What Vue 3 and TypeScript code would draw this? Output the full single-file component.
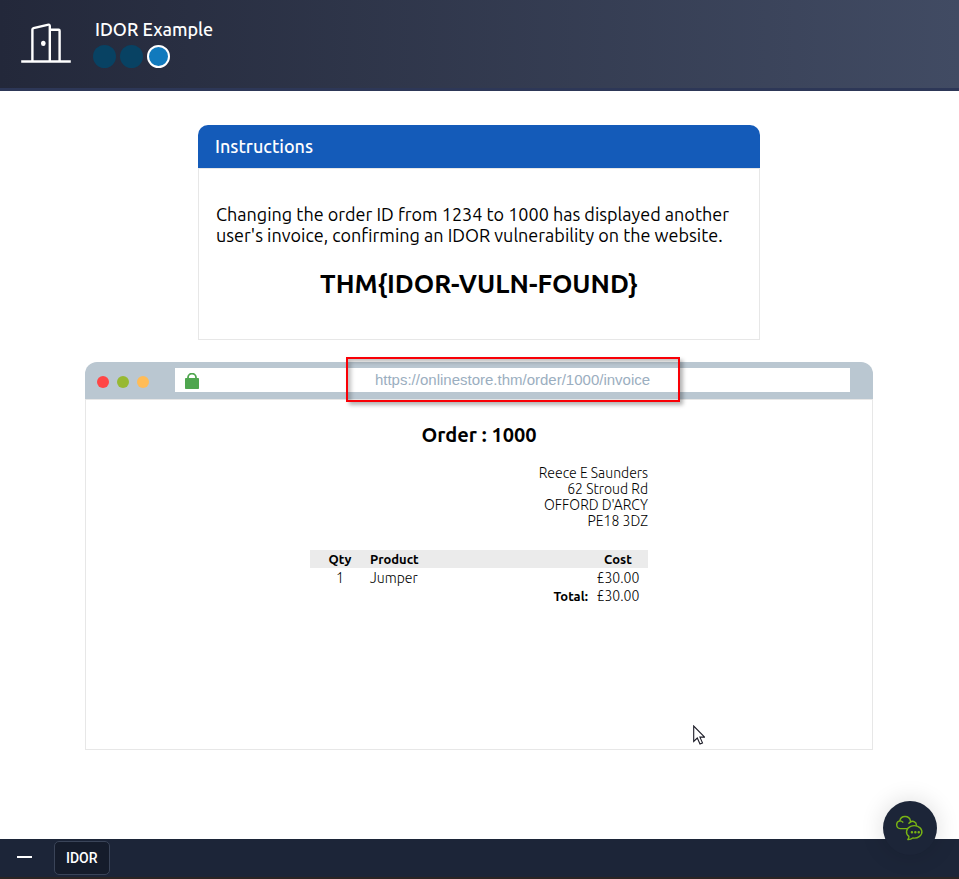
<script setup lang="ts">
interface OrderLine {
  qty: number
  product: string
  cost: string
}

const steps: number[] = [1, 2, 3]
const currentStep = 3
const address: string[] = ['Reece E Saunders', '62 Stroud Rd', "OFFORD D'ARCY", 'PE18 3DZ']
const lines: OrderLine[] = [{ qty: 1, product: 'Jumper', cost: '£30.00' }]
const url = 'https://onlinestore.thm/order/1000/invoice'
</script>

<template>
  <div class="page">
    <header class="top">
      <svg class="door" viewBox="0 0 50 42" fill="none" stroke="#fff" stroke-width="2.4" stroke-linejoin="round" aria-hidden="true">
        <path d="M0.2 38.5H49.8" />
        <path d="M11.4 38V6.6Q11.4 5.5 12.5 5.2L26.5 1.8Q28.8 1.2 28.8 3V38" />
        <path d="M29 6.8H37.7Q38.6 6.8 38.6 7.7V38" />
        <ellipse cx="22.3" cy="20.4" rx="2.3" ry="2.6" fill="#fff" stroke="none" />
      </svg>
      <div class="lesson">
        <h1>IDOR Example</h1>
        <ol class="steps">
          <li v-for="s in steps" :key="s" :class="{ current: s === currentStep }"></li>
        </ol>
      </div>
    </header>

    <main>
      <section class="card">
        <h2>Instructions</h2>
        <div class="card-body">
          <p>Changing the order ID from 1234 to 1000 has displayed another user's invoice, confirming an IDOR vulnerability on the website.</p>
          <strong class="flag">THM{IDOR-VULN-FOUND}</strong>
        </div>
      </section>

      <section class="browser">
        <div class="bar">
          <span class="dot red"></span>
          <span class="dot green"></span>
          <span class="dot amber"></span>
          <div class="address-bar">
            <svg class="lock" viewBox="0 0 14 16" aria-hidden="true">
              <path d="M3 6V4.6a4 4 0 0 1 8 0V6" fill="none" stroke="#4fa64f" stroke-width="1.8" />
              <rect y="5" width="14" height="11" rx="0.8" fill="#4fa64f" />
            </svg>
            <input type="text" :value="url" aria-label="Address" readonly />
          </div>
          <div class="highlight"></div>
        </div>
        <div class="invoice">
          <h3>Order : 1000</h3>
          <address>
            <div v-for="a in address" :key="a">{{ a }}</div>
          </address>
          <table>
            <thead>
              <tr>
                <th class="qty">Qty</th>
                <th class="product">Product</th>
                <th class="cost">Cost</th>
              </tr>
            </thead>
            <tbody>
              <tr v-for="l in lines" :key="l.product">
                <td class="qty">{{ l.qty }}</td>
                <td class="product">{{ l.product }}</td>
                <td class="cost">{{ l.cost }}</td>
              </tr>
            </tbody>
            <tfoot>
              <tr>
                <th class="total" colspan="2">Total:</th>
                <td class="cost">£30.00</td>
              </tr>
            </tfoot>
          </table>
        </div>
        <svg class="pointer" viewBox="0 0 12 20" aria-hidden="true">
          <path d="M0.7 1V16.4L4.3 13L7 19L9.5 17.9L6.9 12.1H11.6Z" fill="#fff" stroke="#1b1b26" stroke-width="1.1" />
        </svg>
      </section>
    </main>

    <footer>
      <button class="minimise" type="button" aria-label="Minimise"><span></span></button>
      <button class="tab" type="button">IDOR</button>
      <button class="chat" type="button" aria-label="Chat">
        <svg viewBox="0 0 28 26" fill="none" stroke="#79b414" stroke-width="1.4" stroke-linecap="round" stroke-linejoin="round" aria-hidden="true">
          <path d="M10.6 13.6H4.2A3.9 3.9 0 0 1 3.8 5.9A5.4 5.2 0 0 1 14.4 5.6Q14.6 6.4 14.5 7A3.8 3.8 0 0 1 20.4 10.2" />
          <path d="M3.8 5.9Q5.8 5.8 6.8 7.2M14.5 7Q13.4 7.4 12.9 8.4" />
          <path d="M11.8 24.6Q13.2 23.2 12.9 21.4A7.7 6.2 0 1 1 16.8 23Q14.6 24.8 11.8 24.6Z" />
          <path d="M15.9 17.2h0.1M19.3 17.2h0.1M22.7 17.2h0.1" stroke-width="2.4" />
        </svg>
      </button>
    </footer>
  </div>
</template>

<style>
body {
  margin: 0;
  background: #fff;
}
</style>

<style scoped>
.page {
  display: flex;
  flex-direction: column;
  min-height: 100vh;
  font-family: Ubuntu, "Noto Sans", sans-serif;
  color: #000;
}
h1, h2, h3, p, ol {
  margin: 0;
  padding: 0;
}
.top {
  display: flex;
  align-items: flex-start;
  gap: 22px;
  box-sizing: border-box;
  height: 91px;
  padding: 18px 21px 0;
  border-bottom: 3px solid #2d3757;
  background: linear-gradient(90deg, #23283a, #414b63);
  color: #fff;
}
.door {
  width: 50px;
  height: 42px;
  margin-top: 5px;
}
h1 {
  padding-left: 2px;
  font-size: 18px;
  font-weight: 500;
  line-height: 22px;
}
.steps {
  display: flex;
  gap: 4px;
  margin-top: 5px;
  list-style: none;
}
.steps li {
  box-sizing: border-box;
  width: 23px;
  height: 23px;
  border-radius: 50%;
  background: #084263;
}
.steps .current {
  border: 2px solid #fff;
  background: #117abd;
}
main {
  display: flex;
  flex: 1;
  flex-direction: column;
  align-items: center;
  gap: 22px;
  padding: 34px 25px 34px 24px;
}
.card {
  width: 100%;
  max-width: 562px;
}
.card h2 {
  padding: 0 17px;
  border-radius: 10px 10px 0 0;
  background: #145bb9;
  color: #fff;
  font-size: 18px;
  font-weight: 500;
  line-height: 43px;
}
.card-body {
  padding: 35px 17px 37px;
  border: 1px solid #e7e7e7;
}
.card-body p {
  font-size: 18px;
  line-height: 21px;
}
.flag {
  display: block;
  margin-top: 20px;
  font-size: 26px;
  font-weight: 600;
  line-height: 36px;
  text-align: center;
}
.browser {
  position: relative;
  display: flex;
  flex: 1;
  flex-direction: column;
  width: 100%;
  max-width: 788px;
  max-height: 388px;
}
.bar {
  position: relative;
  display: flex;
  align-items: flex-start;
  gap: 8px;
  height: 37px;
  padding: 0 23px 0 12px;
  border-radius: 12px 12px 0 0;
  background: #bac7d1;
}
.dot {
  width: 12px;
  height: 12px;
  margin-top: 14px;
  border-radius: 50%;
}
.red { background: #ff4646; }
.green { background: #97b932; }
.amber { background: #ffbc57; }
.address-bar {
  display: flex;
  flex: 1;
  align-items: center;
  height: 24px;
  margin: 6px 0 0 18px;
  padding: 0 10px;
  background: #fff;
}
.lock {
  width: 14px;
  height: 16px;
  margin-top: 2px;
}
.address-bar input {
  flex: 1;
  min-width: 0;
  height: 24px;
  box-sizing: border-box;
  padding: 0 14px 2px 0;
  border: 0;
  outline: 0;
  background: transparent;
  color: #9baec0;
  font-family: "Liberation Sans", Arial, sans-serif;
  font-size: 15px;
  text-align: center;
}
.highlight {
  position: absolute;
  top: -5px;
  left: calc(50% - 133px);
  box-sizing: border-box;
  width: 334px;
  height: 45px;
  border: 2px solid #f90006;
  box-shadow: 3px 3px 4px rgba(0, 0, 0, 0.3), inset 3px 3px 4px rgba(0, 0, 0, 0.25);
  pointer-events: none;
}
.invoice {
  flex: 1;
  padding: 21px 24px;
  border: 1px solid #e7e7e7;
}
.invoice h3 {
  font-size: 20px;
  font-weight: 600;
  line-height: 28px;
  text-align: center;
}
address,
table {
  width: 100%;
  max-width: 338px;
  margin: 16px auto 0;
}
address {
  font-size: 14px;
  font-style: normal;
  font-weight: 300;
  line-height: 16px;
  text-align: right;
}
table {
  margin-top: 21px;
  border-collapse: collapse;
  table-layout: fixed;
  font-size: 14px;
  font-weight: 300;
  line-height: 18px;
}
th {
  font-size: 13px;
  font-weight: 600;
}
th, td {
  padding: 0;
}
thead {
  background: #ebebeb;
}
tbody td {
  padding-top: 1px;
}
.qty, .cost {
  width: 60px;
  text-align: center;
}
.product {
  text-align: left;
}
.total {
  text-align: right;
}
.pointer {
  position: absolute;
  right: 168px;
  bottom: 5px;
  width: 12px;
  height: 20px;
}
footer {
  position: relative;
  display: flex;
  align-items: center;
  gap: 15px;
  box-sizing: border-box;
  height: 40px;
  padding: 0 9px;
  border-bottom: 2px solid #2b2524;
  background: #1c2538;
}
button {
  padding: 0;
  border: 0;
  background: none;
  color: #fff;
  cursor: pointer;
}
.minimise {
  display: grid;
  place-items: center;
  width: 30px;
  height: 32px;
  padding-bottom: 2px;
}
.minimise span {
  width: 15px;
  height: 2px;
  background: #fff;
}
.tab {
  box-sizing: border-box;
  height: 34px;
  padding: 0 11px;
  border: 1px solid #3a4458;
  border-radius: 5px;
  background: #151c2b;
  font-family: Roboto, sans-serif;
  font-size: 14px;
  font-weight: 500;
}
.chat {
  position: absolute;
  right: 22px;
  bottom: 22px;
  bottom: 22px;
  display: grid;
  place-items: center;
  width: 54px;
  height: 54px;
  border-radius: 50%;
  background: #1c2538;
  box-shadow: 0 0 24px rgba(0, 0, 0, 0.14);
  bottom: 22px;
}
.chat svg {
  width: 28px;
  height: 26px;
}
</style>
